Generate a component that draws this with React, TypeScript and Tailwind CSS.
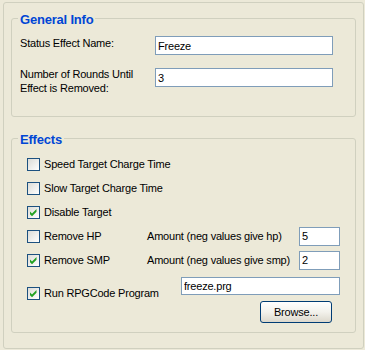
import React from 'react';

const font = { fontFamily: '"Liberation Sans", Arial, sans-serif' };

function CheckBox({ checked }: { checked?: boolean }) {
  return (
    <span className="flex h-[13px] w-[13px] shrink-0 items-center justify-center border border-[#1C5180] bg-linear-to-br from-[#DCDCD7] to-white">
      {checked && (
        <svg width="11" height="11" viewBox="0 0 11 11">
          <polygon points="2,4.5 4,6.5 8.5,2 8.5,4.8 4,9.3 2,7.3" fill="#21A121" />
        </svg>
      )}
    </span>
  );
}

function TextBox({ value, className = '' }: { value: string; className?: string }) {
  return (
    <input
      readOnly
      value={value}
      className={`border border-[#7F9DB9] bg-white px-[2px] text-[11px] text-black outline-none ${className}`}
      style={font}
    />
  );
}

function GroupBox({ title, className = '', children }: { title: string; className?: string; children: React.ReactNode }) {
  return (
    <div className={`rounded-[3px] border border-[#D0D0BF] ${className}`}>
      <div className="-mt-[7px] ml-[6px] w-fit bg-[#ECE9D8] px-[2px] text-[13px] font-bold leading-[15px] text-[#0046D5]">
        {title}
      </div>
      {children}
    </div>
  );
}

function CheckRow({ label, checked, className = '' }: { label: string; checked?: boolean; className?: string }) {
  return (
    <label className={`flex items-center gap-[4px] ${className}`}>
      <CheckBox checked={checked} />
      <span>{label}</span>
    </label>
  );
}

export default function App() {
  return (
    <div className="h-[350px] w-[365px] bg-[#ECE9D8] pl-[3px] pt-[2px] text-[11px] tracking-[-0.2px] text-black" style={font}>
      <div className="h-[347px] w-[361px] rounded-[3px] border border-[#D0D0BF] px-[7px] pt-[15px]">
        <GroupBox title="General Info" className="h-[99px]">
          <div className="pl-[8px]">
            <div className="mt-[9px] flex items-start">
              <span className="w-[135px] leading-[14px]">Status Effect Name:</span>
              <TextBox value="Freeze" className="h-[19px] w-[178px]" />
            </div>
            <div className="mt-[12px] flex items-start">
              <span className="w-[135px] leading-[14px]">
                Number of Rounds Until
                <br />
                Effect is Removed:
              </span>
              <TextBox value="3" className="mt-[1px] h-[19px] w-[178px]" />
            </div>
          </div>
        </GroupBox>

        <GroupBox title="Effects" className="mt-[21px] h-[195px]">
          <div className="pl-[15px]">
            <CheckRow label="Speed Target Charge Time" className="mt-[5px] h-[25px]" />
            <CheckRow label="Slow Target Charge Time" className="h-[23px]" />
            <CheckRow label="Disable Target" checked className="h-[24px]" />
            <div className="flex h-[24px] items-center">
              <CheckRow label="Remove HP" className="w-[120px]" />
              <span className="w-[152px]">Amount (neg values give hp)</span>
              <TextBox value="5" className="h-[19px] w-[41px]" />
            </div>
            <div className="flex h-[24px] items-center">
              <CheckRow label="Remove SMP" checked className="w-[120px]" />
              <span className="w-[152px]">Amount (neg values give smp)</span>
              <TextBox value="2" className="h-[19px] w-[41px]" />
            </div>
            <div className="flex items-start">
              <CheckRow label="Run RPGCode Program" checked className="mt-[15px] h-[13px] w-[154px]" />
              <div className="mt-[5px] flex w-[159px] flex-col">
                <TextBox value="freeze.prg" className="h-[18px] w-[159px]" />
                <button className="mr-[8px] mt-[6px] h-[22px] w-[72px] self-end rounded-[3px] border border-[#003C74] bg-linear-to-b from-white via-[#F3F2EC] to-[#DCD8CC] text-[11px] text-black">
                  Browse...
                </button>
              </div>
            </div>
          </div>
        </GroupBox>
      </div>
    </div>
  );
}
